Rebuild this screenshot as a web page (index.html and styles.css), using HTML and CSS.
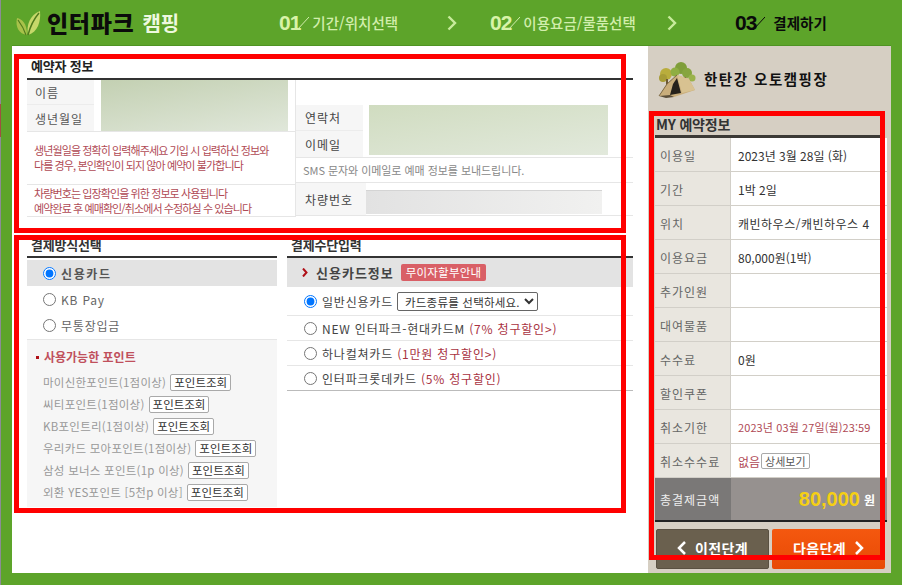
FILE: index.html
```html
<!DOCTYPE html>
<html lang="ko">
<head>
<meta charset="utf-8">
<title>인터파크 캠핑</title>
<link rel="stylesheet" href="styles.css">
</head>
<body>
<div class="page">
  <div class="edge"></div>
  <header class="top">
    <div class="logo">
      <svg class="leaf" viewBox="0 0 26 26" width="26" height="26"><path d="M12 25C4 24 0 17 2 8c5 1 10 5 10 17z" fill="#a8c24a"/><path d="M13 25C11 15 15 5 25 1c1 10-2 21-12 24z" fill="#c6d86a"/><path d="M13 25C15 17 18 10 24 3" stroke="#4f7a1c" stroke-width="1.500" fill="none"/><path d="M11 25C9 19 6 14 3 10" stroke="#4f7a1c" stroke-width="1.200" fill="none"/></svg>
      <span class="logo-a">인터파크</span><span class="logo-b">캠핑</span>
    </div>
    <div class="step s1"><b>01</b><svg class="slash" viewBox="0 0 12 14" width="12" height="14"><path d="M0 14L12 1" stroke="currentColor"/></svg><span>기간/위치선택</span></div>
    <svg class="chev c1" viewBox="0 0 10 16" width="10" height="16"><path d="M1.500 1.500L8 8l-6.500 6.500" stroke="#c8eb9c" stroke-width="2.400" fill="none"/></svg>
    <div class="step s2"><b>02</b><svg class="slash" viewBox="0 0 12 14" width="12" height="14"><path d="M0 14L12 1" stroke="currentColor"/></svg><span>이용요금/물품선택</span></div>
    <svg class="chev c2" viewBox="0 0 10 16" width="10" height="16"><path d="M1.500 1.500L8 8l-6.500 6.500" stroke="#c8eb9c" stroke-width="2.400" fill="none"/></svg>
    <div class="step s3"><b>03</b><svg class="slash" viewBox="0 0 12 14" width="12" height="14"><path d="M0 14L12 1" stroke="currentColor"/></svg><span>결제하기</span></div>
  </header>

  <div class="main">
    <main class="content">
      <section class="booker">
        <h2 class="sec-title">예약자 정보</h2>
        <div class="booker-grid">
          <div class="col-l">
            <div class="id-grid">
              <div class="lab r1">이름</div>
              <div class="lab r2">생년월일</div>
              <div class="blur-green b-name"></div>
            </div>
            <div class="note n1"><p>생년월일을 정확히 입력해주세요 기입 시 입력하신 정보와</p><p>다를 경우, 본인확인이 되지 않아 예약이 불가합니다</p></div>
            <div class="note n2"><p>차량번호는 입장확인을 위한 정보로 사용됩니다</p><p>예약완료 후 예매확인/취소에서 수정하실 수 있습니다</p></div>
          </div>
          <div class="col-r">
            <div class="empty-row"></div>
            <div class="contact-grid">
              <div class="lab r2b">연락처</div>
              <div class="lab r3b">이메일</div>
              <div class="blur-green b-contact"></div>
            </div>
            <div class="sms">SMS 문자와 이메일로 예매 정보를 보내드립니다.</div>
            <div class="car">
              <div class="lab car-lab">차량번호</div>
              <div class="blur-grey"></div>
            </div>
          </div>
        </div>
      </section>

      <section class="pay">
        <div class="pay-l">
          <h2 class="sec-title t2">결제방식선택</h2>
          <label class="method on"><input type="radio" name="m" checked><span>신용카드</span></label>
          <label class="method"><input type="radio" name="m"><span>KB Pay</span></label>
          <label class="method"><input type="radio" name="m"><span>무통장입금</span></label>
          <div class="points">
            <h3 class="pt-title"><i></i>사용가능한 포인트</h3>
            <div class="pt"><span>마이신한포인트(1점이상)</span><button>포인트조회</button></div>
            <div class="pt"><span>씨티포인트(1점이상)</span><button>포인트조회</button></div>
            <div class="pt"><span>KB포인트리(1점이상)</span><button>포인트조회</button></div>
            <div class="pt"><span>우리카드 모아포인트(1점이상)</span><button>포인트조회</button></div>
            <div class="pt"><span>삼성 보너스 포인트(1p 이상)</span><button>포인트조회</button></div>
            <div class="pt"><span>외환 YES포인트 [5천p 이상]</span><button>포인트조회</button></div>
          </div>
        </div>
        <div class="pay-r">
          <h2 class="sec-title t2">결제수단입력</h2>
          <div class="card-head">
            <svg viewBox="0 0 6 9" width="6" height="9"><path d="M1 .5L4.500 4.500 1 8.500" stroke="#b01018" stroke-width="2" fill="none"/></svg>
            <b>신용카드정보</b><span class="badge">무이자할부안내</span>
          </div>
          <label class="card"><input type="radio" name="c" checked><span>일반신용카드</span>
            <select><option>카드종류를 선택하세요.</option></select></label>
          <label class="card"><input type="radio" name="c"><span>NEW 인터파크-현대카드M <em>(7% 청구할인&gt;)</em></span></label>
          <label class="card"><input type="radio" name="c"><span>하나컬쳐카드 <em>(1만원 청구할인&gt;)</em></span></label>
          <label class="card last"><input type="radio" name="c"><span>인터파크롯데카드 <em>(5% 청구할인)</em></span></label>
        </div>
      </section>
    </main>

    <aside class="side">
      <div class="side-head">
        <svg class="tent" viewBox="0 0 38 36" width="38" height="36">
          <circle cx="8" cy="12" r="6" fill="#b9ad3c"/><circle cx="5" cy="16" r="4" fill="#a79c36"/>
          <circle cx="23" cy="6" r="6" fill="#7f9e3a"/><circle cx="17" cy="10" r="4.500" fill="#8fae42"/><circle cx="29" cy="11" r="5" fill="#86a53e"/><circle cx="34" cy="16" r="3.500" fill="#9ab24a"/>
          <path d="M9 17v10M27 15v8" stroke="#6d5a36" stroke-width="2"/>
          <path d="M1 34L9 22 19 13 31 17 37 28 16 35z" fill="#c9ae7c"/>
          <path d="M19 13l12 4 6 11-13 3z" fill="#d8c291"/>
          <path d="M12 33L15 22 19 16 23 31z" fill="#26221c"/>
          <path d="M1 34l11-1 4 2-8 1z" fill="#5b4f3a"/>
          <path d="M1 34L9 22 19 13" stroke="#7d6a45" fill="none"/>
        </svg>
        <h1>한탄강 오토캠핑장</h1>
      </div>
      <h2 class="my-title">MY 예약정보</h2>
      <dl class="info">
        <div><dt>이용일</dt><dd>2023년 3월 28일 (화)</dd></div>
        <div><dt>기간</dt><dd>1박 2일</dd></div>
        <div><dt>위치</dt><dd class="wide">캐빈하우스/캐빈하우스 4</dd></div>
        <div><dt>이용요금</dt><dd>80,000원(1박)</dd></div>
        <div><dt>추가인원</dt><dd></dd></div>
        <div><dt>대여물품</dt><dd></dd></div>
        <div><dt>수수료</dt><dd>0원</dd></div>
        <div><dt>할인쿠폰</dt><dd></dd></div>
        <div><dt>취소기한</dt><dd class="red small">2023년 03월 27일(월)23:59</dd></div>
        <div><dt>취소수수료</dt><dd class="red">없음<button class="detail">상세보기</button></dd></div>
      </dl>
      <div class="total"><div class="t-lab">총결제금액</div><div class="t-val"><strong>80,000</strong><span>원</span></div></div>
      <div class="btns">
        <a class="btn prev"><svg viewBox="0 0 10 16" width="10" height="16"><path d="M8 2L2 8l6 6" stroke="#fff" stroke-width="2.500" fill="none"/></svg>이전단계</a>
        <a class="btn next">다음단계<svg viewBox="0 0 10 16" width="10" height="16"><path d="M2 2l6 6-6 6" stroke="#fff" stroke-width="2.500" fill="none"/></svg></a>
      </div>
    </aside>
  </div>

  <div class="mark m1"></div>
  <div class="mark m2"></div>
  <div class="mark m3"></div>
</div>
</body>
</html>
```

FILE: styles.css
```css
* { box-sizing: border-box; }
html, body { margin: 0; padding: 0; }
body { font-family: "Noto Sans CJK KR", "Noto Sans", sans-serif; font-size: 12px; color: #555; }
.page { position: relative; width: 902px; height: 585px; overflow: hidden; background: #5da42a; padding-left: 1px; }
.edge { position: absolute; left: 0; top: 0; width: 1px; height: 585px; background: linear-gradient(#8c8c96 104px, #a05040 104px, #a05040 137px, #8c8c96 137px); }
h1, h2, h3, p, dl, dd, dt { margin: 0; }

/* header */
.top { height: 45px; display: flex; align-items: center; position: relative; }
.logo { width: 278px; display: flex; align-items: center; padding-left: 14px; flex: none; }
.leaf { flex: none; }
.logo-a { margin-left: 6px; font-size: 23px; font-weight: 900; color: #0b0b0b; letter-spacing: .7px; line-height: 1; }
.logo-b { margin-left: 8px; font-size: 20px; font-weight: 700; color: #eef8df; line-height: 1; }
.step { display: flex; align-items: center; flex: none; color: #d2eeac; font-size: 14.500px; font-weight: 500; }
.step b { font-family: "Liberation Sans", sans-serif; font-size: 21px; font-weight: 700; color: #d8f3a8; letter-spacing: -1px; }
.slash { margin: 0 3px 0 -3px; }
.s1 { width: 168px; }
.s2 { width: 177px; }
.s3 { color: #0a0a0a; font-weight: 700; margin-left: 58px; }
.s3 b { color: #0a0a0a; }
.s3 .slash { margin-right: 8px; }
.chev { flex: none; }
.c1 { margin-right: 33px; }

/* layout */
.main { display: flex; margin-left: 11px; height: 528px; }
.content { width: 636px; height: 100%; background: #fff; padding: 0 0 0 15px; border-top: 1px solid #4f9323; flex: none; }
.sec-title { height: 34px; border-bottom: 2px solid #333; font-size: 13px; font-weight: 700; color: #222; line-height: 40px; padding-left: 4px; letter-spacing: -.2px; }
.booker { width: 606px; }
.booker-grid { display: grid; grid-template-columns: 269px 337px; }
.col-l { border-right: 1px solid #e6e6e6; }
.lab { background: #f6f6f6; color: #555; font-size: 12px; letter-spacing: 1px; display: flex; align-items: center; padding-left: 8px; }
.id-grid { display: grid; grid-template-columns: 67px 7px 187px; grid-template-rows: 25px 26px; }
.lab.r1 { grid-column: 1; grid-row: 1; border-bottom: 1px solid #ececec; }
.lab.r2 { grid-column: 1; grid-row: 2; }
.blur-green { background: linear-gradient(170deg, #c3d0b2, #e0e7da); }
.b-name { grid-column: 3; grid-row: 1 / span 2; }
.note { color: #b04a55; font-size: 11px; letter-spacing: -.9px; line-height: 15px; padding-left: 7px; border-top: 1px solid #e6e6e6; display: flex; flex-direction: column; justify-content: center; }
.n1 { height: 53px; }
.n2 { height: 33px; border-bottom: 1px solid #e6e6e6; }
.empty-row { height: 25px; }
.contact-grid { display: grid; grid-template-columns: 67px 6px 239px 25px; grid-template-rows: 26px 26px; }
.lab.r2b { grid-column: 1; grid-row: 1; padding-left: 9px; border-bottom: 1px solid #ececec; color: #444; }
.lab.r3b { grid-column: 1; grid-row: 2; padding-left: 9px; color: #444; }
.b-contact { grid-column: 3; grid-row: 1 / span 2; height: 50px; background: linear-gradient(170deg, #d0dcc0, #e2e9dc); }
.sms { height: 26px; border-top: 1px solid #e6e6e6; border-bottom: 1px solid #e6e6e6; font-size: 11px; letter-spacing: -.05px; color: #888; display: flex; align-items: center; padding-left: 7px; }
.car { height: 33px; display: flex; border-bottom: 1px solid #e6e6e6; }
.car-lab { width: 70px; padding-left: 9px; color: #444; flex: none; }
.blur-grey { width: 236px; height: 24px; margin-top: 7px; background: linear-gradient(90deg, #e2e2e2, #f1f1f0); border-top: 1px solid #d4d4d4; }

.pay { display: flex; width: 606px; gap: 10px; margin-top: 24px; }
.pay-l { width: 250px; flex: none; }
.pay-r { width: 346px; flex: none; }
.pay .sec-title { height: 17px; line-height: 0; padding-top: 4px; color: #333; }
.method { height: 26px; display: flex; align-items: center; padding-left: 16px; font-size: 12px; letter-spacing: .8px; color: #666; }
.method input, .card input { margin: 0 5px 0 0; width: 13px; height: 13px; flex: none; }
.method.on { background: #e3e3e3; font-weight: 700; margin-top: 2px; color: #555; letter-spacing: 1.6px; }
.points { background: #f6f6f6; border-top: 1px solid #e6e6e6; height: 168px; margin-top: 1px; padding: 8px 0 0 16px; }
.pt-title { position: relative; font-size: 12px; font-weight: 700; color: #c0505c; line-height: 18px; margin-bottom: 5px; padding-left: 1px; }
.pt-title i { position: absolute; left: -7px; top: 8px; width: 3px; height: 3px; background: #b01018; }
.pt { height: 22px; display: flex; align-items: center; font-size: 11.500px; letter-spacing: .25px; color: #999; }
.pt button, .detail { font: inherit; font-size: 11.500px; letter-spacing: 0; color: #333; background: #fff; border: 1px solid #a9a9a9; border-radius: 2px; padding: 0 3px; height: 17px; line-height: 14px; margin-left: 4px; white-space: nowrap; }
.card-head { height: 29px; background: #e3e3e3; display: flex; align-items: center; padding-left: 15px; }
.card-head b { font-size: 13px; color: #444; margin-left: 8px; letter-spacing: 1px; }
.badge { margin-left: 7px; background: #d95f66; color: #fff; font-size: 11.500px; letter-spacing: .2px; padding: 0 5px; height: 17px; line-height: 17px; border-radius: 2px; }
.card { height: 25px; display: flex; align-items: center; padding-left: 17px; border-bottom: 1px solid #e6e6e6; font-size: 12px; letter-spacing: .8px; color: #444; white-space: nowrap; }
.card:first-of-type { height: 29px; }
.card em { font-style: normal; color: #a9323f; }
.card.last { border-bottom-color: #bbb; }
.card select { font: inherit; font-size: 11.500px; letter-spacing: .2px; width: 141px; height: 19px; margin-left: 4px; padding: 0 0 0 3px; border: 1px solid #666; border-radius: 2px; background-color: #fff; color: #333; }

/* sidebar */
.side { width: 243px; flex: none; background: #d6cfc3; padding: 0 3px 0 7px; border-top: 1px solid #4f9323; }
.side-head { display: flex; align-items: center; height: 65px; padding: 0 0 0 3px; }
.tent { flex: none; margin-top: 3px; }
.side-head h1 { font-size: 14.500px; font-weight: 700; color: #111; margin-left: 8px; letter-spacing: 1.500px; }
.my-title { height: 27px; border-bottom: 3px solid #3c3a36; font-size: 14px; font-weight: 700; color: #333; line-height: 26px; width: 225px; letter-spacing: -.2px; padding-left: 1px; }
.info { width: 232px; }
.info > div { height: 34px; display: flex; border-bottom: 1px solid #d2cfc8; }
.info dt { width: 76px; flex: none; background: #e9e6df; border-right: 1px solid #d2cfc8; color: #666; font-size: 12px; letter-spacing: 1px; padding: 1px 0 0 5px; display: flex; align-items: center; }
.info dd { flex: 1; background: #fff; color: #333; font-size: 12px; padding: 1px 0 0 7px; display: flex; align-items: center; white-space: nowrap; overflow: hidden; }
.info dd.wide { letter-spacing: .5px; }
.info dd.red { color: #b04a55; }
.info dd.small { font-size: 11px; letter-spacing: .1px; }
.detail { font-size: 11px; padding: 0 3px; height: 16px; margin-left: 1px; color: #555; }
.total { display: flex; height: 44px; border-bottom: 2px solid #222; width: 232px; }
.t-lab { width: 76px; background: #7a7877; color: #eee; font-size: 12px; letter-spacing: 1px; padding-left: 5px; display: flex; align-items: center; }
.t-val { flex: 1; background: #96918f; display: flex; align-items: center; justify-content: flex-end; padding-right: 12px; color: #fff; font-weight: 700; }
.t-val strong { font-family: "Liberation Sans", sans-serif; font-size: 20px; color: #f5cf14; margin-right: 4px; }
.t-val span { font-size: 12px; }
.btns { display: flex; gap: 3px; margin-top: 7px; padding-left: 1px; }
.btn { width: 113px; height: 40px; border-radius: 2px; display: flex; align-items: center; justify-content: center; gap: 8px; padding-bottom: 2px; color: #fff; font-size: 14px; font-weight: 700; letter-spacing: .4px; }
.prev { background: #6a604e; border: 1px solid #5a5142; }
.next { background: linear-gradient(#f4580f, #e84a05); }

/* red review marks */
.mark { position: absolute; border: 5px solid #f00; pointer-events: none; }
.m1 { left: 14px; top: 54px; width: 612px; height: 179px; }
.m2 { left: 14px; top: 235px; width: 612px; height: 278px; }
.m3 { left: 649px; top: 111px; width: 236px; height: 449px; }
```
